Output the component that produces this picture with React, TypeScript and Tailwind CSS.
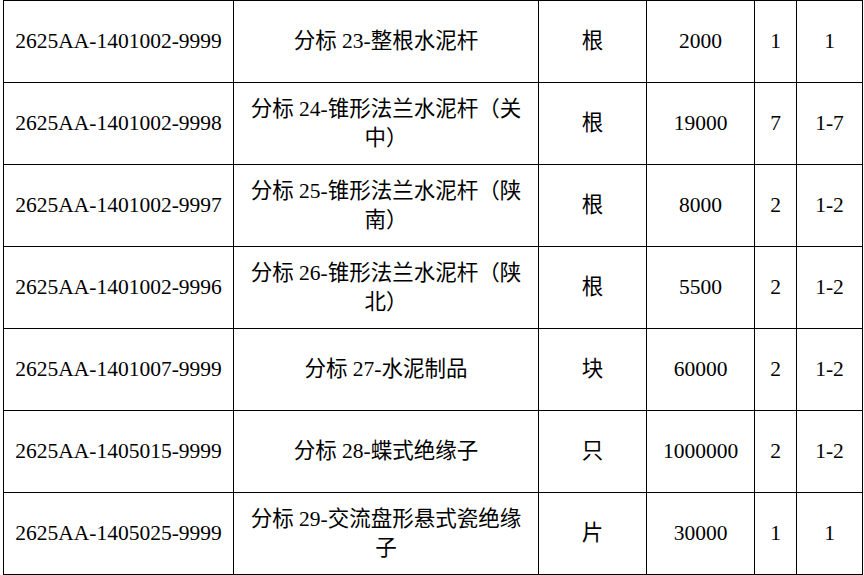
const rows = [
  ['2625AA-1401002-9999', '分标 23-整根水泥杆', '根', '2000', '1', '1'],
  ['2625AA-1401002-9998', '分标 24-锥形法兰水泥杆（关中）', '根', '19000', '7', '1-7'],
  ['2625AA-1401002-9997', '分标 25-锥形法兰水泥杆（陕南）', '根', '8000', '2', '1-2'],
  ['2625AA-1401002-9996', '分标 26-锥形法兰水泥杆（陕北）', '根', '5500', '2', '1-2'],
  ['2625AA-1401007-9999', '分标 27-水泥制品', '块', '60000', '2', '1-2'],
  ['2625AA-1405015-9999', '分标 28-蝶式绝缘子', '只', '1000000', '2', '1-2'],
  ['2625AA-1405025-9999', '分标 29-交流盘形悬式瓷绝缘子', '片', '30000', '1', '1'],
]

const widths = ['w-[230px]', 'w-[305px]', 'w-[108px]', 'w-[108px]', 'w-[42px]', 'w-[66px]']

export default function App() {
  return (
    <div className="w-[864px] h-[575px] bg-white overflow-hidden pl-[3px]">
      <table
        className="table-fixed border-collapse text-black text-[21.5px] leading-[29px]"
        style={{ fontFamily: '"Liberation Serif", "Noto Sans CJK SC", serif', width: 860 }}
      >
        <colgroup>
          {widths.map((w, i) => (
            <col key={i} className={w} />
          ))}
        </colgroup>
        <tbody>
          {rows.map((r, i) => (
            <tr key={i} className="h-[82px]">
              {r.map((c, j) => (
                <td
                  key={j}
                  className={`border border-black text-center align-middle p-0 ${j === 1 ? 'px-[10px]' : ''}`}
                >
                  {c}
                </td>
              ))}
            </tr>
          ))}
        </tbody>
      </table>
    </div>
  )
}
